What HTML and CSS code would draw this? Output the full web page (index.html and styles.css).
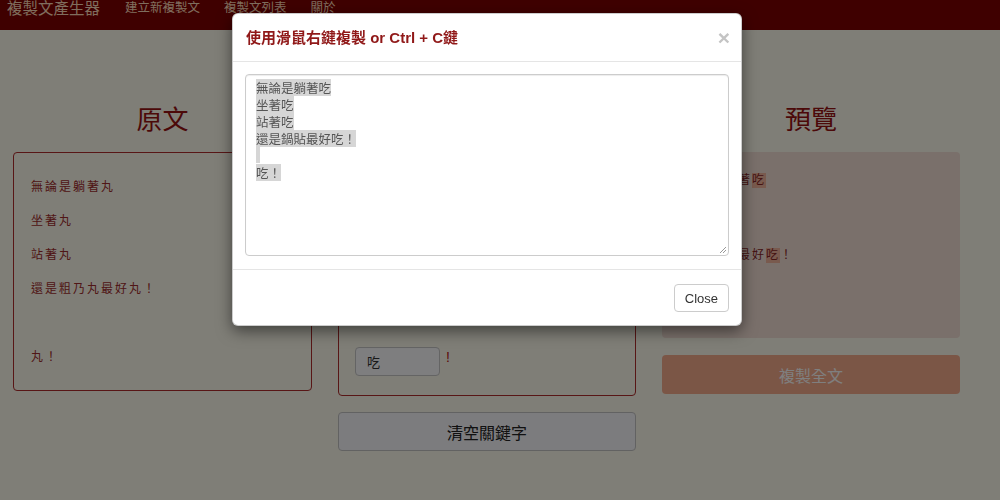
FILE: index.html
```html
<!DOCTYPE html>
<html lang="zh-Hant">
<head>
<meta charset="utf-8">
<title>複製文產生器</title>
<link rel="stylesheet" href="styles.css">
</head>
<body>
<nav class="navbar">
  <a class="brand">複製文產生器</a>
  <ul class="nav-links">
    <li>建立新複製文</li>
    <li>複製文列表</li>
    <li>關於</li>
  </ul>
</nav>

<main class="container">
  <section class="column">
    <h2 class="col-title">原文</h2>
    <div class="card source">
      <div class="line">無論是躺著丸</div>
      <div class="line">坐著丸</div>
      <div class="line">站著丸</div>
      <div class="line">還是粗乃丸最好丸！</div>
      <div class="line">&nbsp;</div>
      <div class="line">丸！</div>
    </div>
  </section>

  <section class="column">
    <h2 class="col-title">關鍵字</h2>
    <div class="card keywords">
      <div class="kw-top">
        <label class="kw-label">關鍵字</label>
        <div class="kw-row"><input class="kw-input" value="丸" readonly></div>
        <label class="kw-label">替換為</label>
      </div>
      <div class="kw-row"><input class="kw-input" value="吃" readonly><span class="req">!</span></div>
    </div>
    <button class="btn btn-clear">清空關鍵字</button>
  </section>

  <section class="column">
    <h2 class="col-title">預覽</h2>
    <div class="preview">
      <div class="pline">無論是躺著<span class="hl">吃</span></div>
      <div class="pline">坐著<span class="hl">吃</span></div>
      <div class="pline">站著<span class="hl">吃</span></div>
      <div class="pline">還是鍋貼最好<span class="hl">吃</span>！</div>
      <div class="pline">&nbsp;</div>
      <div class="pline"><span class="hl">吃</span>！</div>
    </div>
    <button class="btn btn-copy">複製全文</button>
  </section>
</main>

<div class="backdrop"></div>

<div class="modal">
  <div class="modal-header">
    <h4 class="modal-title">使用滑鼠右鍵複製 or Ctrl + C鍵</h4>
    <span class="close">×</span>
  </div>
  <div class="modal-body">
    <div class="textarea">
      <div class="tline"><span class="sel">無論是躺著吃</span></div>
      <div class="tline"><span class="sel">坐著吃</span></div>
      <div class="tline"><span class="sel">站著吃</span></div>
      <div class="tline"><span class="sel">還是鍋貼最好吃！</span></div>
      <div class="tline"><span class="sel empty"></span></div>
      <div class="tline"><span class="sel">吃！</span></div>
      <svg class="grip" width="8" height="8" viewBox="0 0 8 8"><path d="M1 7 L7 1 M4 7 L7 4" stroke="#999" stroke-width="1" fill="none"/></svg>
    </div>
  </div>
  <div class="modal-footer">
    <button class="btn-close">Close</button>
  </div>
</div>
</body>
</html>
```

FILE: styles.css
```css
* { box-sizing: border-box; }

body {
  margin: 0;
  background: #fffcee;
  font-family: "Liberation Sans", "Noto Sans CJK TC", sans-serif;
  color: #333;
}

.navbar {
  height: 30px;
  background: #7e0000;
  display: flex;
  align-items: flex-start;
  padding: 0 7px;
}

.brand {
  font-size: 15.5px;
  line-height: 17px;
  color: #ffdcbc;
}

.nav-links {
  list-style: none;
  margin: 0 0 0 25px;
  padding: 0;
  display: flex;
  gap: 24px;
  font-size: 12.5px;
  line-height: 17px;
  color: #ffdcbc;
}

.container {
  display: grid;
  grid-template-columns: 299px 298px 298px;
  column-gap: 26px;
  padding: 0 0 0 13px;
}

.col-title {
  margin: 72px 0 14px;
  font-size: 26px;
  line-height: 36px;
  font-weight: 400;
  text-align: center;
  color: #981212;
}

.card {
  border: 1px solid #b02c2c;
  border-radius: 4px;
}

.source {
  height: 239px;
  padding: 17px 17px 16px;
  font-size: 12px;
  letter-spacing: 2px;
  color: #a02c2c;
}

.source .line {
  line-height: 34px;
}

.keywords {
  height: 244px;
  padding: 16px 16px 19px;
  display: flex;
  flex-direction: column;
  justify-content: space-between;
}

.kw-top {
  display: flex;
  flex-direction: column;
  gap: 10px;
}

.kw-label {
  font-size: 13px;
  color: #a02c2c;
}

.kw-row {
  display: flex;
  align-items: flex-start;
  gap: 6px;
}

.kw-input {
  width: 85px;
  height: 29px;
  border: 1px solid #c8c8c8;
  border-radius: 4px;
  background: #fcfcff;
  padding: 0 11px;
  font: 13px "Noto Sans CJK TC", sans-serif;
  color: #333;
}

.req {
  color: #b81414;
  font-size: 14px;
  line-height: 20px;
}

.btn {
  display: block;
  width: 100%;
  height: 39px;
  border-radius: 4px;
  font: 16px "Liberation Sans", "Noto Sans CJK TC", sans-serif;
}

.btn-clear {
  margin-top: 16px;
  background: #f9f9fd;
  border: 1px solid #c4c4c4;
  color: #222;
}

.preview {
  height: 186px;
  padding: 16px 20px;
  background: #f4e0d6;
  border-radius: 4px;
  font-size: 12px;
  letter-spacing: 2px;
  color: #8a2626;
}

.pline {
  line-height: 25px;
}

.hl {
  display: inline-block;
  line-height: 15px;
  background: #f2b49c;
}

.btn-copy {
  margin-top: 17px;
  background: #f7ad8d;
  border: none;
  color: #ffffff;
}

.backdrop {
  position: fixed;
  inset: 0;
  z-index: 10;
  background: rgba(0, 0, 0, 0.5);
}

.modal {
  position: absolute;
  z-index: 20;
  top: 13px;
  left: 232px;
  width: 510px;
  background: #fff;
  border: 1px solid rgba(0, 0, 0, 0.2);
  border-radius: 6px;
  box-shadow: 0 5px 15px rgba(0, 0, 0, 0.5);
}

.modal-header {
  display: flex;
  justify-content: space-between;
  align-items: center;
  padding: 15px 13px 14px;
  border-bottom: 1px solid #e5e5e5;
}

.modal-title {
  margin: 0;
  font-size: 15px;
  line-height: 18px;
  font-weight: 600;
  color: #901818;
}

.close {
  font-size: 21px;
  line-height: 18px;
  font-weight: 700;
  color: #c4c4c4;
  margin-right: -2px;
}

.modal-body {
  padding: 12px 12px 13px;
}

.textarea {
  position: relative;
  height: 182px;
  border: 1px solid #ccc;
  border-radius: 4px;
  padding: 3px 10px;
  box-shadow: inset 0 1px 1px rgba(0, 0, 0, 0.075);
  font: 12.5px "Noto Sans CJK TC", sans-serif;
  color: #555;
}

.tline {
  height: 17px;
}

.sel {
  display: inline-block;
  line-height: 17px;
  background: #d6d6d6;
}

.sel.empty {
  width: 4px;
  height: 17px;
  vertical-align: top;
}

.grip {
  position: absolute;
  right: 1px;
  bottom: 1px;
}

.modal-footer {
  display: flex;
  justify-content: flex-end;
  padding: 14px 12px 13px;
  border-top: 1px solid #e5e5e5;
}

.btn-close {
  height: 28px;
  padding: 0 10px;
  background: #fff;
  border: 1px solid #ccc;
  border-radius: 4px;
  font: 13px "Liberation Sans", sans-serif;
  color: #333;
}
```
